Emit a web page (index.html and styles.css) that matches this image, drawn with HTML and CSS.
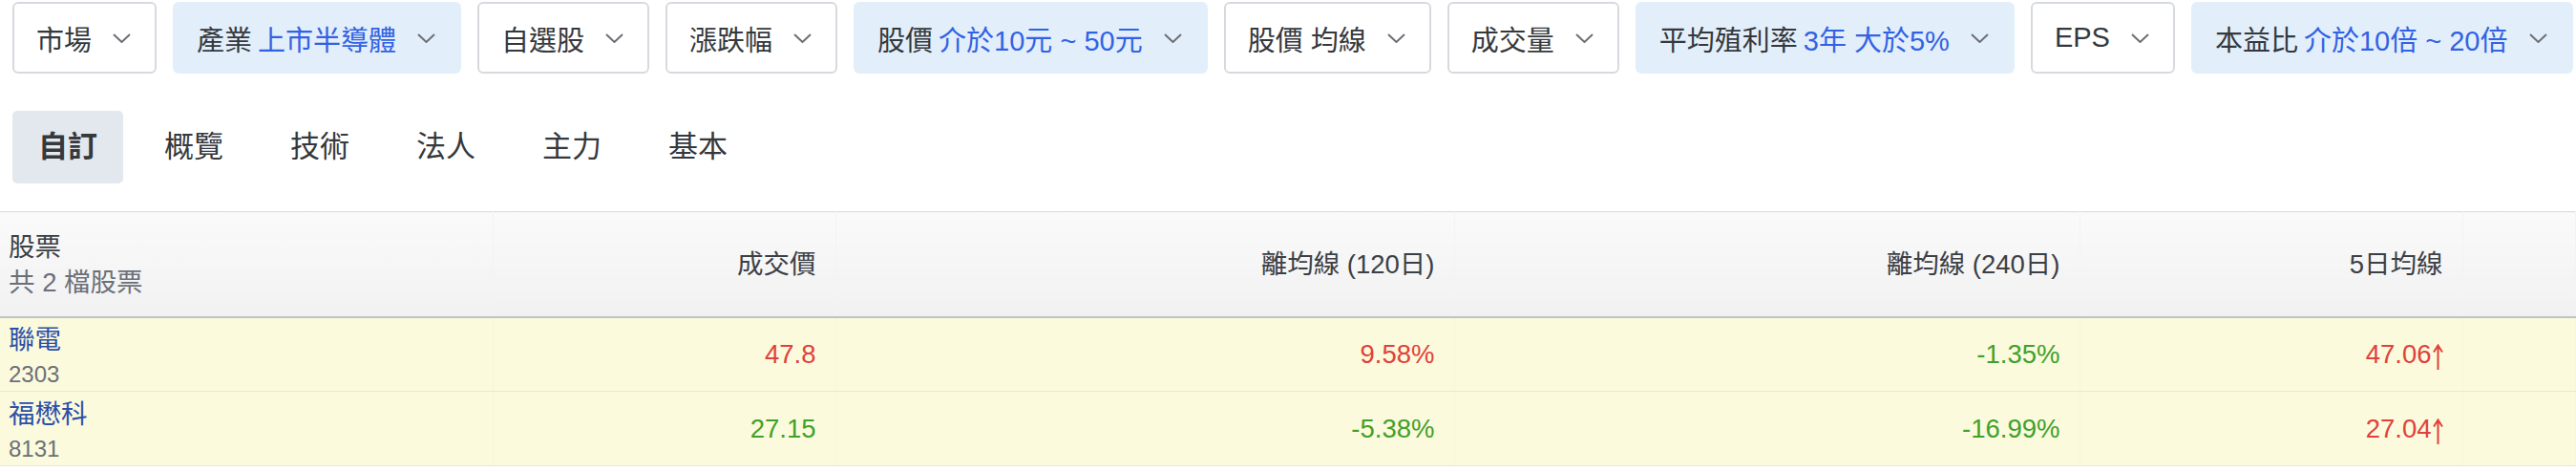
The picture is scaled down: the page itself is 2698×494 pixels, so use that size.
FILE: index.html
```html
<!DOCTYPE html>
<html lang="zh-Hant">
<head>
  <meta charset="UTF-8">
  <meta name="viewport" content="width=device-width, initial-scale=1.0">
  <title>選股</title>
  <link rel="stylesheet" href="styles.css">
</head>
<body>
  <div class="filters">
    <div class="filter">市場 <svg class="chev" viewBox="0 0 19 10"><polyline points="1,1 9.5,9 18,1"/></svg></div>
    <div class="filter active">產業 <span class="val">上市半導體</span> <svg class="chev" viewBox="0 0 19 10"><polyline points="1,1 9.5,9 18,1"/></svg></div>
    <div class="filter">自選股 <svg class="chev" viewBox="0 0 19 10"><polyline points="1,1 9.5,9 18,1"/></svg></div>
    <div class="filter">漲跌幅 <svg class="chev" viewBox="0 0 19 10"><polyline points="1,1 9.5,9 18,1"/></svg></div>
    <div class="filter active">股價 <span class="val">介於10元 ~ 50元</span> <svg class="chev" viewBox="0 0 19 10"><polyline points="1,1 9.5,9 18,1"/></svg></div>
    <div class="filter">股價 均線 <svg class="chev" viewBox="0 0 19 10"><polyline points="1,1 9.5,9 18,1"/></svg></div>
    <div class="filter">成交量 <svg class="chev" viewBox="0 0 19 10"><polyline points="1,1 9.5,9 18,1"/></svg></div>
    <div class="filter active">平均殖利率 <span class="val">3年 大於5%</span> <svg class="chev" viewBox="0 0 19 10"><polyline points="1,1 9.5,9 18,1"/></svg></div>
    <div class="filter">EPS <svg class="chev" viewBox="0 0 19 10"><polyline points="1,1 9.5,9 18,1"/></svg></div>
    <div class="filter active">本益比 <span class="val">介於10倍 ~ 20倍</span> <svg class="chev" viewBox="0 0 19 10"><polyline points="1,1 9.5,9 18,1"/></svg></div>
  </div>

  <div class="tabs">
    <div class="tab current">自訂</div>
    <div class="tab">概覽</div>
    <div class="tab">技術</div>
    <div class="tab">法人</div>
    <div class="tab">主力</div>
    <div class="tab">基本</div>
  </div>

  <table class="stocks">
    <colgroup>
      <col style="width: 516px">
      <col style="width: 359px">
      <col style="width: 648px">
      <col style="width: 655px">
      <col style="width: 401px">
      <col>
    </colgroup>
    <thead>
      <tr>
        <th class="name-col">股票<div class="count">共 2 檔股票</div></th>
        <th>成交價</th>
        <th>離均線 (120日)</th>
        <th>離均線 (240日)</th>
        <th>5日均線</th>
        <th></th>
      </tr>
    </thead>
    <tbody>
      <tr>
        <td class="name-col"><a href="#">聯電</a><div class="code">2303</div></td>
        <td class="up">47.8</td>
        <td class="up">9.58%</td>
        <td class="down">-1.35%</td>
        <td class="up">47.06<svg class="arrow" viewBox="0 0 11 27"><path d="M5.5 27V2M1 8.5L5.5 1.5L10 8.5"/></svg></td>
        <td></td>
      </tr>
      <tr>
        <td class="name-col"><a href="#">福懋科</a><div class="code">8131</div></td>
        <td class="down">27.15</td>
        <td class="down">-5.38%</td>
        <td class="down">-16.99%</td>
        <td class="up">27.04<svg class="arrow" viewBox="0 0 11 27"><path d="M5.5 27V2M1 8.5L5.5 1.5L10 8.5"/></svg></td>
        <td></td>
      </tr>
    </tbody>
  </table>
</body>
</html>
```

FILE: styles.css
```css
body {
  margin: 0;
  padding: 2px 0 0;
  font-family: "Liberation Sans", "Noto Sans CJK TC", sans-serif;
  color: #35383c;
  background: #fff;
}
.filters {
  display: flex;
  gap: 17px;
  padding-left: 13px;
  white-space: nowrap;
}
.filter {
  flex: none;
  display: flex;
  align-items: center;
  box-sizing: border-box;
  height: 75px;
  padding: 0 25px 0 23px;
  font-size: 29px;
  border: 2px solid #d6dadf;
  border-radius: 6px;
  background: #fff;
  color: #35383c;
}
.filter.active {
  background: #e2effb;
  border-color: #e2effb;
}
.filter .val {
  color: #3262e3;
  margin-left: 6px;
}
.chev {
  width: 19px;
  height: 10px;
  margin-left: 22px;
  fill: none;
  stroke: #6c6f74;
  stroke-width: 2;
}
.tabs {
  display: flex;
  gap: 16px;
  padding-left: 13px;
  margin-top: 39px;
}
.tab {
  box-sizing: border-box;
  height: 76px;
  padding: 0 27px;
  font-size: 31px;
  line-height: 76px;
  border-radius: 5px;
  color: #35383c;
}
.tab.current {
  background: #e3e7ee;
  font-weight: bold;
}
.stocks {
  margin-top: 29px;
  width: 100%;
  table-layout: fixed;
  border-collapse: collapse;
  border-top: 1px solid #dcdcdc;
}
.stocks th {
  height: 110px;
  padding: 0 20px 0 9px;
  box-sizing: border-box;
  text-align: right;
  font-size: 27.5px;
  font-weight: normal;
  line-height: 37px;
  color: #3c4045;
  background: linear-gradient(#fafafa, #f1f1f1);
  border-bottom: 2px solid #bfc2c6;
  border-right: 1px solid #f3f3f3;
}
.stocks th.name-col {
  text-align: left;
  padding-top: 1px;
}
.count {
  color: #6b7078;
}
.stocks td {
  height: 78px;
  box-sizing: border-box;
  padding: 0 20px 0 9px;
  text-align: right;
  font-size: 27.5px;
  background: #fcfadd;
  border-bottom: 1px solid #e9e7d2;
  border-right: 1px solid #f8f6da;
}
.stocks td.name-col {
  text-align: left;
  padding-top: 5px;
  line-height: 36px;
}
.stocks a {
  color: #2a50a9;
  text-decoration: none;
}
.code {
  font-size: 24px;
  line-height: 35px;
  color: #6b7078;
}
.up {
  color: #e0413b;
}
.down {
  color: #3fa12b;
}
.arrow {
  width: 11px;
  height: 27px;
  margin-left: 1px;
  vertical-align: -7px;
  fill: none;
  stroke: #e0413b;
  stroke-width: 2;
}
```
